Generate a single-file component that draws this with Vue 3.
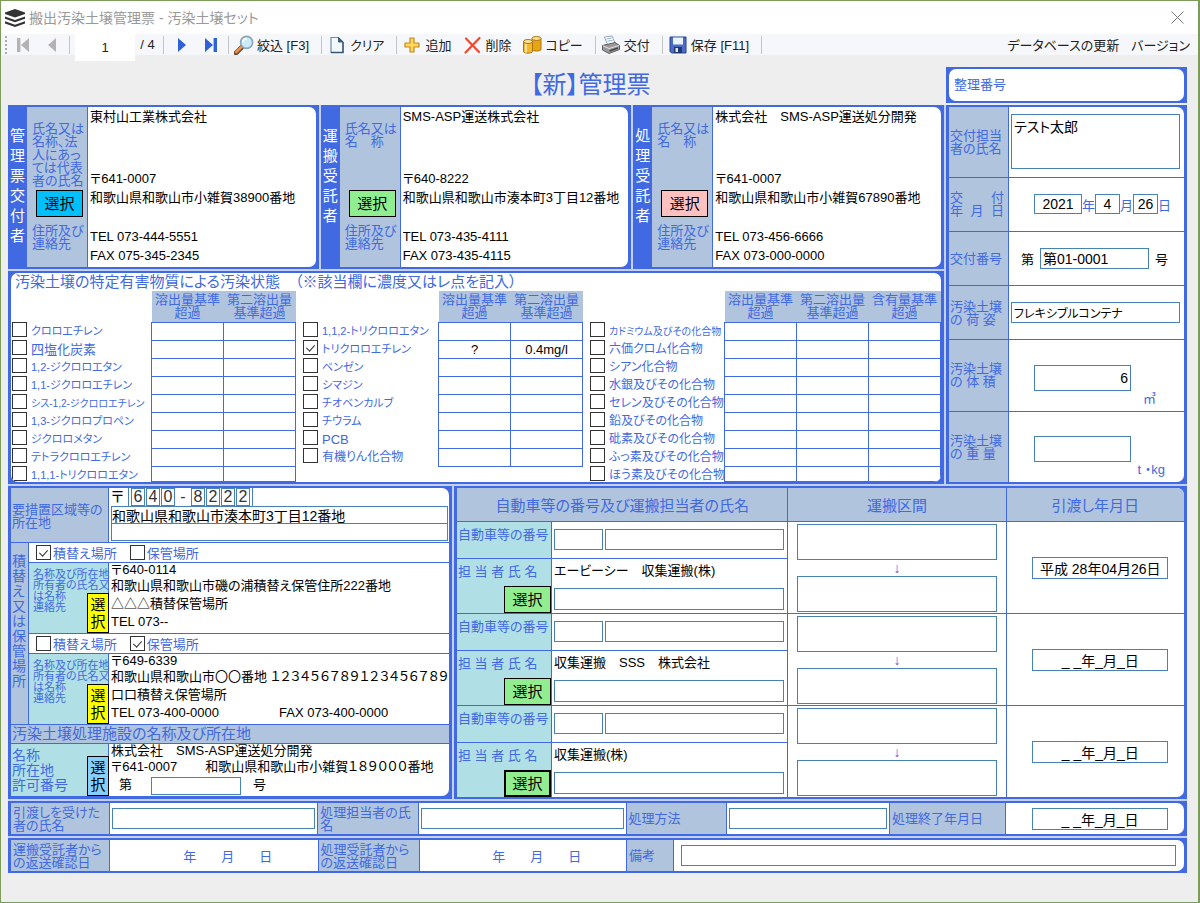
<script setup>
import { reactive } from 'vue'

const parties = [
  {
    head: '管理票交付者',
    nameLabel: ['氏名又は', '名称、法', '人にあっ', 'ては代表', '者の氏名'],
    tone: 'sky',
    name: '東村山工業株式会社',
    zip: '〒641-0007',
    address: '和歌山県和歌山市小雑賀38900番地',
    tel: 'TEL 073-444-5551',
    fax: 'FAX 075-345-2345',
  },
  {
    head: '運搬受託者',
    nameLabel: ['氏名又は', '名　称'],
    tone: 'green',
    name: 'SMS-ASP運送株式会社',
    zip: '〒640-8222',
    address: '和歌山県和歌山市湊本町3丁目12番地',
    tel: 'TEL 073-435-4111',
    fax: 'FAX 073-435-4115',
  },
  {
    head: '処理受託者',
    nameLabel: ['氏名又は', '名　称'],
    tone: 'pink',
    name: '株式会社　SMS-ASP運送処分開発',
    zip: '〒641-0007',
    address: '和歌山県和歌山市小雑賀67890番地',
    tel: 'TEL 073-456-6666',
    fax: 'FAX 073-000-0000',
  },
]

const elution = ['溶出量基準', '超過']
const second = ['第二溶出量', '基準超過']
const content = ['含有量基準', '超過']

const row = (name, size = '', checked = false, values = []) => ({ name, size, checked, values })

const groups = reactive([
  {
    key: 'a',
    heads: [elution, second],
    rows: [
      row('クロロエチレン', 'kana'),
      row('四塩化炭素', 'kanji'),
      row('1,2-ジクロロエタン', 'kana'),
      row('1,1-ジクロロエチレン', 'kana'),
      row('シス-1,2-ジクロロエチレン', 'long'),
      row('1,3-ジクロロプロペン', 'kana'),
      row('ジクロロメタン', 'kana'),
      row('テトラクロロエチレン', 'kana'),
      row('1,1,1-トリクロロエタン', 'kana'),
    ],
  },
  {
    key: 'b',
    heads: [elution, second],
    rows: [
      row('1,1,2-トリクロロエタン', 'kana'),
      row('トリクロロエチレン', 'kana', true, ['?', '0.4mg/l']),
      row('ベンゼン', 'kana'),
      row('シマジン', 'kana'),
      row('チオベンカルブ', 'kana'),
      row('チウラム', 'kana'),
      row('PCB', 'kanji'),
      row('有機りん化合物'),
    ],
  },
  {
    key: 'c',
    heads: [elution, second, content],
    rows: [
      row('カドミウム及びその化合物', 'long'),
      row('六価クロム化合物'),
      row('シアン化合物'),
      row('水銀及びその化合物'),
      row('セレン及びその化合物'),
      row('鉛及びその化合物'),
      row('砒素及びその化合物'),
      row('ふっ素及びその化合物'),
      row('ほう素及びその化合物'),
    ],
  },
])

const form = reactive({
  page: '1',
  person: 'テスト太郎',
  year: '2021',
  month: '4',
  day: '26',
  issueNo: '第01-0001',
  packing: 'フレキシブルコンテナ',
  volume: '6',
  weight: '',
  zip: ['6', '4', '0', '-', '8', '2', '2', '2'],
  address1: '和歌山県和歌山市湊本町3丁目12番地',
  address2: '',
  permit: '',
  receiver: '',
  handler: '',
  method: '',
  finished: '_ _年_月_日',
  note: '',
})

const places = reactive([
  {
    transfer: true,
    storage: false,
    lines: ['〒640-0114', '和歌山県和歌山市磯の浦積替え保管住所222番地', '△△△積替保管場所'],
    tel: 'TEL 073--',
    fax: '',
  },
  {
    transfer: false,
    storage: true,
    lines: ['〒649-6339', '和歌山県和歌山市〇〇番地 １２３４５６７８９１２３４５６７８９', '口口積替え保管場所'],
    tel: 'TEL 073-400-0000',
    fax: 'FAX 073-400-0000',
  },
])

const carriers = reactive([
  { company: 'エービーシー　収集運搬(株)', plate: '', number: '', person: '', from: '', to: '', date: '平成 28年04月26日' },
  { company: '収集運搬　SSS　株式会社', plate: '', number: '', person: '', from: '', to: '', date: '_ _年_月_日' },
  { company: '収集運搬(株)', plate: '', number: '', person: '', from: '', to: '', date: '_ _年_月_日' },
])
</script>

<template>
  <div class="window">
    <header class="titlebar">
      <svg class="logo" width="20" height="18" viewBox="0 0 20 18" aria-hidden="true">
        <path d="M10 0 20 3.500V5L10 8.500 0 5V3.500Z" fill="#333" />
        <path d="M0 7.500 10 11 20 7.500V9.700L10 13.200 0 9.700Z" fill="#333" />
        <path d="M0 12.200 10 15.700 20 12.200V14.400L10 18 0 14.400Z" fill="#333" />
      </svg>
      <h1>搬出汚染土壌管理票 - 汚染土壌セット</h1>
      <button class="close" aria-label="閉じる">
        <svg width="13" height="13" viewBox="0 0 13 13"><path d="M.5.5 12.5 12.5M12.5.5.5 12.5" stroke="#777" fill="none" /></svg>
      </button>
    </header>

    <nav class="toolbar">
      <span class="grip"></span>
      <button class="nav" aria-label="最初">
        <svg width="14" height="14" viewBox="0 0 14 14"><path d="M1 0h3.4v14H1zM13 0v14L5 7z" fill="#b3b3b3" /></svg>
      </button>
      <button class="nav" aria-label="前へ">
        <svg width="14" height="14" viewBox="0 0 14 14"><path d="M11 0v14L3 7z" fill="#b3b3b3" /></svg>
      </button>
      <span class="sep"></span>
      <input v-model="form.page" class="page" aria-label="ページ" />
      <span class="count">/ 4</span>
      <span class="sep"></span>
      <button class="nav" aria-label="次へ">
        <svg width="14" height="14" viewBox="0 0 14 14"><path d="M3 0v14l8-7z" fill="#2f62d9" /></svg>
      </button>
      <button class="nav" aria-label="最後">
        <svg width="14" height="14" viewBox="0 0 14 14"><path d="M1 0v14l8-7zM9.6 0H13v14H9.6z" fill="#2f62d9" /></svg>
      </button>
      <span class="sep"></span>
      <button class="tool">
        <svg width="20" height="20" viewBox="0 0 20 20">
          <path d="M2 18 8.500 11.500" stroke="#6b4a33" stroke-width="4.600" stroke-linecap="round" />
          <path d="M2.300 17 8 11.300" stroke="#f0924a" stroke-width="2.600" stroke-linecap="round" />
          <circle cx="12.600" cy="7.400" r="6" fill="#c9ecfb" stroke="#8ba3b5" stroke-width="1.600" />
          <path d="M8.800 7.200A4 4 0 0 1 12.600 3.600" stroke="#fff" stroke-width="1.800" fill="none" />
        </svg>
        絞込 [F3]
      </button>
      <span class="sep"></span>
      <button class="tool">
        <svg width="20" height="20" viewBox="0 0 20 20">
          <path d="M4 2.500h7.500L16 7v10.500H4z" fill="#f3f9fe" stroke="#6d8da8" stroke-width="1.200" />
          <path d="M11.500 2.500V7H16z" fill="#3c5c7c" stroke="#3c5c7c" />
          <path d="M16 7v10.500H4" stroke="#355574" stroke-width="1.400" fill="none" />
        </svg>
        クリア
      </button>
      <span class="sep"></span>
      <button class="tool">
        <svg width="20" height="20" viewBox="0 0 20 20">
          <path d="M8 3h4v5h5v4h-5v5H8v-5H3V8h5z" fill="#ffd65c" stroke="#c38a1c" stroke-width="1.200" stroke-linejoin="round" />
        </svg>
        追加
      </button>
      <button class="tool">
        <svg width="20" height="20" viewBox="0 0 20 20">
          <path d="M4 3.500 17 17M17.500 3 3.500 17.500" stroke="#f04a2e" stroke-width="2.200" fill="none" stroke-linecap="round" />
        </svg>
        削除
      </button>
      <button class="tool">
        <svg width="20" height="20" viewBox="0 0 20 20">
          <path d="M10 3.500v11c0 2 9 2 9 0v-11z" fill="#e8a512" stroke="#a87412" />
          <ellipse cx="14.500" cy="3.500" rx="4.500" ry="2" fill="#ffe08a" stroke="#a87412" />
          <path d="M1.500 6.500v10c0 2.200 9 2.200 9 0v-10z" fill="#f4b62a" stroke="#a87412" />
          <path d="M4 9v8.500" stroke="#fff0b8" stroke-width="1.600" />
          <ellipse cx="6" cy="6.500" rx="4.500" ry="2" fill="#ffe79c" stroke="#a87412" />
        </svg>
        コピー
      </button>
      <span class="sep"></span>
      <button class="tool">
        <svg width="20" height="20" viewBox="0 0 20 20">
          <path d="M3.500 2 11 1l3.500 8-7.500 2z" fill="#fff" stroke="#98a4b4" />
          <path d="M5.500 4 10.500 3.200M6.500 6.200l5-.8" stroke="#8fb4e0" />
          <path d="M1.500 10.500 14 7.500l4.500 3v4L8 18.500l-6.500-3.500z" fill="#9a9a9a" stroke="#606060" />
          <path d="M2 10.800 8 13.500 18 10.500" stroke="#e4e4e4" fill="none" />
          <path d="M8.500 16 17 13" stroke="#444" stroke-width="1.400" />
        </svg>
        交付
      </button>
      <span class="sep"></span>
      <button class="tool">
        <svg width="20" height="20" viewBox="0 0 20 20">
          <path d="M2 2h16v16H3.500L2 16.500z" fill="#4a6cc4" stroke="#26438f" />
          <path d="M5 2.500h10v7H5z" fill="#eaf3fc" />
          <path d="M6 12h8v6H6z" fill="#1f3672" />
          <path d="M7.500 13H10v4H7.500z" fill="#dfe8f6" />
        </svg>
        保存 [F11]
      </button>
      <span class="sep"></span>
      <span class="spacer"></span>
      <button class="link">データベースの更新</button>
      <button class="link">バージョン</button>
    </nav>

    <main class="client">
      <div class="heading">
        <h2>【新】管理票</h2>
        <div class="panel round">
          <div class="inner serial">整理番号</div>
        </div>
      </div>

      <div class="sheet">
        <div class="upper">
          <div class="upper-left">
            <div class="parties">
              <section v-for="p in parties" :key="p.head" class="panel party">
                <h3 class="party-head"><span>{{ p.head }}</span></h3>
                <div class="party-label">
                  <div class="party-name"><div v-for="l in p.nameLabel" :key="l">{{ l }}</div></div>
                  <button class="pick" :class="p.tone">選択</button>
                  <div class="party-contact">住所及び<br />連絡先</div>
                </div>
                <div class="inner party-body">
                  <p>{{ p.name }}</p>
                  <p class="party-zip">{{ p.zip }}</p>
                  <p>{{ p.address }}</p>
                  <p class="party-tel">{{ p.tel }}</p>
                  <p>{{ p.fax }}</p>
                </div>
              </section>
            </div>

            <section class="panel round">
              <div class="inner">
                <h3 class="state-title">汚染土壌の特定有害物質による汚染状態　（※該当欄に濃度又はレ点を記入）</h3>
                <div class="groups">
                  <table v-for="g in groups" :key="g.key" class="subst">
                    <thead>
                      <tr>
                        <td class="blank"></td>
                        <th v-for="h in g.heads" :key="h[0]" scope="col">{{ h[0] }}<br />{{ h[1] }}</th>
                      </tr>
                    </thead>
                    <tbody>
                      <tr v-for="(r, i) in g.rows" :key="r.name">
                        <th scope="row">
                          <div class="subst-name" :class="r.size">
                            <input :id="g.key + i" v-model="r.checked" type="checkbox" />
                            <label :for="g.key + i">{{ r.name }}</label>
                          </div>
                        </th>
                        <td v-for="(h, c) in g.heads" :key="h[0]">{{ r.values[c] }}</td>
                      </tr>
                    </tbody>
                  </table>
                </div>
              </div>
            </section>
          </div>

          <section class="panel side">
            <div class="inner side-grid">
              <label for="person">交付担当<br />者の氏名</label>
              <div class="cell person"><textarea id="person" v-model="form.person"></textarea></div>

              <label for="year"><span class="spread">交 付</span><span class="spread">年 月 日</span></label>
              <div class="cell date">
                <input id="year" v-model="form.year" class="w-year" />年
                <input v-model="form.month" class="w-two" aria-label="月" />月
                <input v-model="form.day" class="w-two" aria-label="日" />日
              </div>

              <label for="issue">交付番号</label>
              <div class="cell issue">
                <span>第</span><input id="issue" v-model="form.issueNo" /><span>号</span>
              </div>

              <label for="packing">汚染土壌<br />の 荷 姿</label>
              <div class="cell packing"><input id="packing" v-model="form.packing" /></div>

              <label for="volume">汚染土壌<br />の 体 積</label>
              <div class="cell amount"><input id="volume" v-model="form.volume" /><span>㎥</span></div>

              <label for="weight">汚染土壌<br />の 重 量</label>
              <div class="cell amount last"><input id="weight" v-model="form.weight" /><span>t ・kg</span></div>
            </div>
          </section>
        </div>

        <div class="lower">
          <section class="panel">
            <div class="inner">
              <div class="area">
                <label class="area-label" for="addr1">要措置区域等の<br />所在地</label>
                <div class="area-body">
                  <div class="zip">
                    <span>〒</span>
                    <div class="zip-boxes">
                      <template v-for="(z, i) in form.zip" :key="i">
                        <b v-if="z === '-'">-</b>
                        <input v-else v-model="form.zip[i]" maxlength="1" :aria-label="'郵便番号' + (i + 1)" />
                      </template>
                    </div>
                  </div>
                  <input id="addr1" v-model="form.address1" />
                  <input v-model="form.address2" class="addr2" aria-label="所在地2" />
                </div>
              </div>

              <div class="places">
                <h3 class="places-head"><span>積替え又は保管場所</span></h3>
                <div>
                  <template v-for="(p, i) in places" :key="i">
                    <div class="place-kind">
                      <label><input v-model="p.transfer" type="checkbox" />積替え場所</label>
                      <label><input v-model="p.storage" type="checkbox" />保管場所</label>
                    </div>
                    <div class="place">
                      <div class="place-label">
                        名称及び所在地<br />所有者の氏名又<br />は名称<br />連絡先
                        <button class="pick tall yellow">選択</button>
                      </div>
                      <div class="place-body">
                        <p v-for="l in p.lines" :key="l">{{ l }}</p>
                        <p class="phones"><span>{{ p.tel }}</span><span>{{ p.fax }}</span></p>
                      </div>
                    </div>
                  </template>
                </div>
              </div>

              <h3 class="plant-title">汚染土壌処理施設の名称及び所在地</h3>
              <div class="plant">
                <div class="plant-label">
                  名称<br />所在地<br />許可番号
                  <button class="pick tall blue">選択</button>
                </div>
                <div class="place-body">
                  <p>株式会社　SMS-ASP運送処分開発</p>
                  <p class="plant-address"><span>〒641-0007</span><span>和歌山県和歌山市小雑賀１８９０００番地</span></p>
                  <p class="permit"><label for="permit">第</label><input id="permit" v-model="form.permit" /><span>号</span></p>
                </div>
              </div>
            </div>
          </section>

          <section class="panel">
            <div class="inner">
              <table class="carriers">
                <thead>
                  <tr>
                    <th scope="col">自動車等の番号及び運搬担当者の氏名</th>
                    <th scope="col" class="route-col">運搬区間</th>
                    <th scope="col" class="date-col">引渡し年月日</th>
                  </tr>
                </thead>
                <tbody>
                  <tr v-for="(c, i) in carriers" :key="i">
                    <td>
                      <div class="carrier">
                        <label class="c-label" :for="'plate' + i">自動車等の番号</label>
                        <div class="c-plate">
                          <input :id="'plate' + i" v-model="c.plate" class="w-plate" />
                          <input v-model="c.number" class="grow" aria-label="登録番号" />
                        </div>
                        <div class="c-label c-person">
                          <label :for="'person' + i">担 当 者 氏 名</label>
                          <button class="pick green" :class="{ focus: i === 2 }">選択</button>
                        </div>
                        <div class="c-name">
                          <p>{{ c.company }}</p>
                          <input :id="'person' + i" v-model="c.person" />
                        </div>
                      </div>
                    </td>
                    <td>
                      <div class="route">
                        <input v-model="c.from" aria-label="運搬区間（自）" />
                        <span>↓</span>
                        <input v-model="c.to" aria-label="運搬区間（至）" />
                      </div>
                    </td>
                    <td class="handover"><input v-model="c.date" class="w-date" aria-label="引渡し年月日" /></td>
                  </tr>
                </tbody>
              </table>
            </div>
          </section>
        </div>

        <section class="panel">
          <div class="inner strip done">
            <label for="receiver">引渡しを受けた<br />者の氏名</label>
            <div><input id="receiver" v-model="form.receiver" /></div>
            <label for="handler">処理担当者の氏<br />名</label>
            <div><input id="handler" v-model="form.handler" /></div>
            <label for="method">処理方法</label>
            <div><input id="method" v-model="form.method" /></div>
            <label for="finished">処理終了年月日</label>
            <div class="finished"><input id="finished" v-model="form.finished" class="w-date" /></div>
          </div>
        </section>

        <section class="panel">
          <div class="inner strip back">
            <div class="tag">運搬受託者から<br />の返送確認日</div>
            <div class="ymd"><span>年</span><span>月</span><span>日</span></div>
            <div class="tag">処理受託者から<br />の返送確認日</div>
            <div class="ymd"><span>年</span><span>月</span><span>日</span></div>
            <label for="note">備考</label>
            <div class="note"><input id="note" v-model="form.note" /></div>
          </div>
        </section>
      </div>
    </main>
  </div>
</template>

<style>
body {
  margin: 0;
  background: #7a9c58;
}
</style>

<style scoped>
* {
  box-sizing: border-box;
}

.window {
  min-height: calc(100vh - 2px);
  margin: 1px 2px 1px 1px;
  background: #eee;
  color: #000;
  font-family: "Liberation Sans", "Noto Sans CJK JP", sans-serif;
  font-size: 13px;
  font-feature-settings: "palt";
}

h1,
h2,
h3,
p {
  margin: 0;
  font-weight: normal;
  white-space: nowrap;
}

button,
input,
textarea {
  margin: 0;
  padding: 0;
  border: 0;
  border-radius: 0;
  background: none;
  color: inherit;
  font: inherit;
  font-feature-settings: inherit;
}

button {
  white-space: nowrap;
}

main input,
main textarea {
  display: block;
  width: 100%;
  height: 21px;
  min-width: 0;
  padding: 0 2px;
  border: 1px solid #4682b4;
  background: #fff;
  color: #000;
  font-size: 14px;
  line-height: 16px;
}

main textarea {
  resize: none;
}

main input[type="checkbox"] {
  position: relative;
  flex: none;
  width: 15px;
  height: 15px;
  padding: 0;
  border: 1px solid #333;
  appearance: none;
}

main input[type="checkbox"]:checked::after {
  content: "";
  position: absolute;
  top: 2px;
  left: 4px;
  width: 4px;
  height: 7px;
  border: solid #333;
  border-width: 0 1px 1px 0;
  transform: rotate(42deg);
}

/* Title bar and toolbar */
.titlebar {
  display: flex;
  align-items: center;
  height: 33px;
  padding: 0 14px 0 4px;
  background: #fff;
}

.titlebar h1 {
  flex: 1;
  margin-left: 4px;
  color: #999;
  font-size: 14px;
  line-height: 20px;
}

.close {
  display: flex;
}

.toolbar {
  display: flex;
  align-items: center;
  height: 21px;
  padding: 0 8px 0 4px;
  background: #f6f7fb;
  color: #222;
}

.grip {
  width: 3px;
  height: 18px;
  border-left: 2px dotted #aaa;
}

.nav {
  display: flex;
  flex: none;
  justify-content: center;
  width: 29px;
}

.sep {
  flex: none;
  width: 1px;
  height: 18px;
  margin: 0 3px;
  background: #c4c4c4;
}

.page {
  align-self: flex-start;
  width: 60px;
  height: 27px;
  margin-left: 2px;
  background: #fff;
  text-align: center;
}

.count {
  width: 25px;
  text-align: center;
}

.tool {
  display: flex;
  flex: none;
  align-items: center;
  gap: 3px;
  padding: 0 9px 0 2px;
}

.spacer {
  flex: 1;
}

.link {
  margin-left: 12px;
  flex: none;
}

/* Framework of the form */
.client {
  padding: 12px 11px 12px 7px;
  color: #4169e1;
}

.heading {
  display: grid;
  grid-template-columns: 227px 1fr 241px;
  gap: 2px;
  padding-bottom: 2px;
}

.heading h2 {
  grid-column: 2;
  font-size: 24px;
  line-height: 36px;
  text-align: center;
}

.panel {
  min-width: 0;
  padding: 2px 3px;
  background: #4169e1;
}

.inner {
  overflow: hidden;
  border-radius: 0 7px 7px 0;
  background: #fff;
}

.round > .inner {
  border-radius: 7px;
}

.serial {
  padding-left: 5px;
  line-height: 32px;
}

.sheet,
.upper-left {
  display: grid;
  gap: 2px;
  background: #c3d0f4;
}

.upper {
  display: grid;
  grid-template-columns: 1fr 241px;
  gap: 2px;
}

.lower {
  display: grid;
  grid-template-columns: 444fr 733fr;
  gap: 2px;
}

.parties {
  display: grid;
  grid-template-columns: repeat(3, 1fr);
  gap: 2px;
}

.pick {
  width: 47px;
  height: 27px;
  border: 1px solid #000;
  color: #000;
  font-size: 15px;
  line-height: 24px;
}

.pick.tall {
  position: absolute;
  right: -1px;
  bottom: 0;
  width: 22px;
  height: 40px;
  padding: 0 2px;
  line-height: 17px;
  white-space: normal;
}

.sky {
  background: #00bfff;
}

.green {
  background: #90ee90;
}

.pink {
  background: #ffc0c0;
}

.yellow {
  background: #ff0;
}

.blue {
  background: #87cefa;
}

.focus {
  border-width: 2px;
}

/* Issuer, carrier, processor */
.party {
  display: grid;
  grid-template-columns: 17px 61px 1fr;
  padding-left: 2px;
}

.party-head {
  padding-top: 19px;
  color: #fff;
  font-size: 15px;
  line-height: 20px;
  white-space: normal;
}

.party-head span {
  display: block;
  width: 15px;
}

.party-label {
  padding-left: 5px;
  border-right: 1px solid #4169e1;
  background: #b0c4de;
  line-height: 13px;
  white-space: nowrap;
}

.party-name {
  height: 83px;
  padding-top: 15px;
}

.party-label .pick {
  display: block;
  margin-left: 4px;
}

.party-contact {
  margin-top: 7px;
}

.party-body {
  padding: 0 0 2px 2px;
  color: #000;
  line-height: 19px;
}

.party-zip {
  margin-top: 43px;
}

.party-tel {
  margin-top: 20px;
}

/* Contamination state */
.state-title {
  padding-left: 4px;
  font-size: 15px;
  line-height: 18px;
}

.groups {
  display: grid;
  grid-template-columns: 285fr 281fr 352fr;
  gap: 6px;
  align-items: start;
}

.subst {
  width: 100%;
  border-collapse: collapse;
  table-layout: fixed;
}

.subst th,
.subst td {
  height: 18px;
  padding: 0;
  font-weight: normal;
  line-height: 13px;
}

.subst thead th {
  width: 72px;
  height: 31px;
  background: #b0c4de;
}

.subst tbody td {
  border: 1px solid #4169e1;
  color: #000;
  text-align: center;
}

.subst tbody th {
  vertical-align: top;
}

.subst tbody tr:nth-child(9) > * {
  height: 15px;
}

.subst-name {
  display: flex;
  gap: 4px;
  height: 15px;
  padding-left: 1px;
  font-size: 12px;
  line-height: 19px;
  text-align: left;
  white-space: nowrap;
}

.subst-name.kanji {
  font-size: 13px;
}

.subst-name.kana {
  font-size: 11px;
}

.subst-name.long {
  font-size: 10px;
}

/* Issue details */
.side {
  display: grid;
}

.side-grid {
  display: grid;
  grid-template-columns: 60px 1fr;
  grid-template-rows: 71fr 54fr 55fr 54fr 72fr 70fr;
}

.side-grid > label {
  display: flex;
  flex-direction: column;
  justify-content: center;
  padding-left: 1px;
  border-right: 1px solid #4169e1;
  border-bottom: 1px solid #4169e1;
  background: #b0c4de;
  line-height: 13px;
  white-space: nowrap;
}

.spread {
  display: block;
  width: 54px;
  text-align-last: justify;
}

.cell {
  display: flex;
  align-items: center;
  padding: 0 4px 0 2px;
  border-bottom: 1px solid #4169e1;
}

.cell.last,
.side-grid > label:nth-last-child(2) {
  border-bottom: 0;
}

.person textarea {
  height: 55px;
  padding-top: 4px;
}

.date {
  padding-left: 25px;
}

.date input {
  height: 20px;
  padding: 0;
  text-align: center;
}

.date .w-year {
  width: 48px;
}

.date .w-two {
  width: 25px;
}

.issue {
  gap: 6px;
  padding: 0 16px 0 12px;
  color: #000;
}

.packing input {
  font-size: 12px;
}

.amount {
  flex-direction: column;
  align-items: flex-start;
  justify-content: flex-end;
  padding: 0 0 5px 25px;
}

.amount input {
  width: 97px;
  height: 26px;
  text-align: right;
}

.amount span {
  width: 131px;
  line-height: 15px;
  text-align: right;
}

.amount:not(.last) span {
  width: 122px;
}

/* Site, transfer places, plant */
.area {
  display: grid;
  grid-template-columns: 98px 1fr;
  border-bottom: 1px solid #4169e1;
}

.area-label {
  padding: 15px 0 0 1px;
  border-right: 1px solid #4169e1;
  background: #b0c4de;
  line-height: 13px;
  white-space: nowrap;
}

.area-body {
  padding: 0 1px 1px 2px;
}

.zip {
  display: flex;
  gap: 4px;
  height: 18px;
  color: #000;
  font-size: 15px;
  line-height: 18px;
}

.zip-boxes {
  display: flex;
  gap: 1px;
  padding: 0 2px;
  border: solid #4682b4;
  border-width: 0 1px;
}

.zip-boxes input,
.zip-boxes b {
  width: 14px;
  height: 18px;
  padding: 0;
  color: #333;
  font-size: 16px;
  font-weight: normal;
  text-align: center;
}

.area-body > input {
  height: 18px;
  padding: 0;
  line-height: 14px;
}

.area-body > .addr2 {
  height: 17px;
  border-top: 0;
}

.places {
  display: grid;
  grid-template-columns: 18px 1fr;
}

.places-head {
  padding: 11px 0 0 1px;
  border-right: 1px solid #4169e1;
  border-bottom: 1px solid #4169e1;
  background: #b0c4de;
  font-size: 14px;
  line-height: 15px;
  white-space: normal;
}

.places-head span {
  display: block;
  width: 15px;
}

.place-kind {
  display: flex;
  gap: 13px;
  height: 20px;
  padding-left: 7px;
  border-bottom: 1px solid #4169e1;
}

.place-kind label {
  display: flex;
  align-items: center;
  gap: 2px;
}

.place {
  display: grid;
  grid-template-columns: 80px 1fr;
  height: 71px;
  border-bottom: 1px solid #4169e1;
}

.place-label {
  position: relative;
  padding: 6px 0 0 4px;
  border-right: 1px solid #4169e1;
  background: #b0e0e6;
  font-size: 11px;
  line-height: 11px;
  white-space: nowrap;
}

.place-body {
  padding-left: 2px;
  color: #000;
  line-height: 18px;
}

.place-body p:first-child {
  line-height: 14px;
}

.phones {
  display: flex;
}

.phones span:first-child {
  width: 168px;
}

.plant-title {
  padding-left: 1px;
  border-bottom: 1px solid #4169e1;
  background: #b0c4de;
  font-size: 15px;
  line-height: 18px;
}

.plant {
  display: grid;
  grid-template-columns: 98px 1fr;
  height: 52px;
}

.plant-label {
  position: relative;
  padding: 4px 0 0 1px;
  border-right: 1px solid #4169e1;
  background: #b0e0e6;
  font-size: 14px;
  line-height: 15px;
}

.plant-address {
  display: flex;
  gap: 28px;
}

.permit {
  display: flex;
  gap: 12px;
  padding-left: 8px;
}

.place-body .permit input {
  width: 90px;
  height: 18px;
  margin: 1px 0 0 7px;
}

/* Vehicles and handover */
.carriers {
  width: 100%;
  border-collapse: collapse;
  table-layout: fixed;
}

.carriers th {
  height: 34px;
  padding: 0;
  border-right: 1px solid #4169e1;
  background: #b0c4de;
  font-size: 15px;
  font-weight: normal;
}

.carriers .route-col {
  width: 30%;
}

.carriers .date-col {
  width: 178px;
}

.carriers td {
  height: 91px;
  padding: 0;
  border: solid #4169e1;
  border-width: 1px 1px 0 0;
}

.carriers th:last-child,
.carriers td:last-child {
  border-right: 0;
}

.carrier {
  display: grid;
  grid-template-columns: 95px 1fr;
  grid-template-rows: 36px 55px;
}

.c-label {
  padding: 4px 0 0 1px;
  border-right: 1px solid #4169e1;
  background: #b0e0e6;
  line-height: 17px;
  white-space: nowrap;
}

.c-plate {
  display: flex;
  gap: 2px;
  padding: 7px 3px 0 2px;
}

.c-plate .w-plate {
  flex: none;
  width: 49px;
}

.c-person,
.c-name {
  border-top: 1px solid #4169e1;
}

.c-person .pick {
  display: block;
  margin: 6px 0 0 auto;
}

.c-name {
  padding: 2px 3px 0 2px;
  color: #000;
}

.c-name p {
  height: 27px;
  line-height: 19px;
}

.c-name input {
  height: 22px;
}

.route {
  padding: 1px 9px 0 9px;
  font-size: 14px;
  line-height: 16px;
  text-align: center;
}

.route input {
  height: 36px;
}

.route span {
  display: block;
}

.carriers .handover {
  padding-left: 10px;
  vertical-align: middle;
}

main .w-date {
  width: 136px;
  height: 22px;
  margin: 0 auto;
  text-align: center;
}

/* Bottom strips */
.strip {
  display: grid;
  height: 31px;
}

.done {
  grid-template-columns: 99px 208fr 102px 207fr 101px 163fr 117px 178px;
}

.back {
  grid-template-columns: 99px 208fr 102px 207fr 48px 511fr;
}

.strip > label,
.strip > .tag {
  display: grid;
  align-content: center;
  padding-left: 2px;
  border: solid #4169e1;
  border-width: 0 1px;
  background: #b0c4de;
  line-height: 13px;
  white-space: nowrap;
}

.strip > :first-child {
  border-left: 0;
}

.strip > div:not(.tag) {
  display: flex;
  align-items: center;
  padding: 0 2px;
}

.strip > div.finished {
  padding: 0 0 0 10px;
}

.strip > div.ymd {
  gap: 25px;
  justify-content: center;
  padding-left: 30px;
}

.strip > div.note {
  padding: 0 8px 0 7px;
}
</style>
